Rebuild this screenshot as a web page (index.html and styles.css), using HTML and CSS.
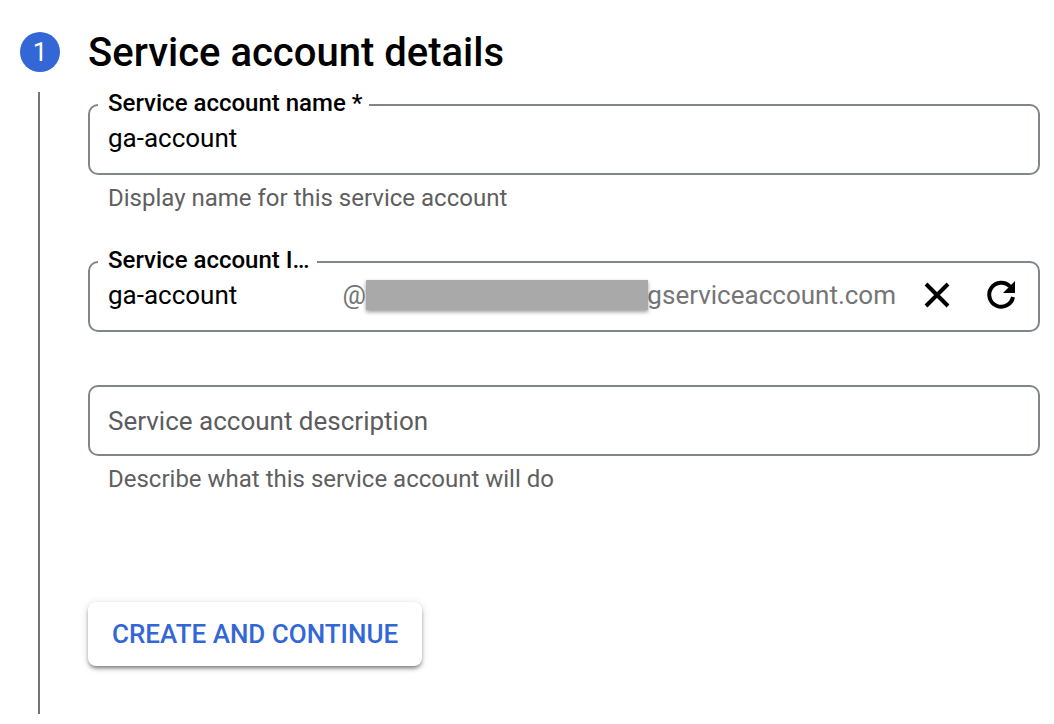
FILE: index.html
```html
<!DOCTYPE html>
<html lang="en">
<head>
<meta charset="utf-8">
<meta name="viewport" content="width=device-width, initial-scale=1">
<title>Service account details</title>
<link rel="stylesheet" href="styles.css">
</head>
<body>
<main class="step">
  <div class="rail">
    <span class="step-number">1</span>
    <span class="rail-line"></span>
  </div>
  <form class="content">
    <h1 class="title">Service account details</h1>

    <div class="field-group">
      <div class="field field-labelled">
        <label class="field-label" for="account-name">Service account name *</label>
        <input class="field-input" id="account-name" type="text" value="ga-account" aria-describedby="name-hint">
      </div>
      <p class="hint" id="name-hint">Display name for this service account</p>
    </div>

    <div class="field-group">
      <div class="field field-labelled">
        <label class="field-label" for="account-id">Service account I…</label>
        <input class="field-input" id="account-id" type="text" value="ga-account">
        <span class="suffix">@t<span class="redacted"></span>gserviceaccount.com</span>
        <span class="actions">
          <button class="icon-button" type="button" aria-label="Clear">
            <svg class="icon" viewBox="0 0 36 36" aria-hidden="true"><path d="M7 7 29 29M29 7 7 29" fill="none" stroke="#000" stroke-width="4"/></svg>
          </button>
          <button class="icon-button" type="button" aria-label="Regenerate">
            <svg class="icon" viewBox="0 0 36 36" aria-hidden="true"><path d="M27 9.500A12 12 0 1 0 30 20" fill="none" stroke="#000" stroke-width="4"/><path d="M32 4V16H20Z" fill="#000"/></svg>
          </button>
        </span>
      </div>
    </div>

    <div class="field-group">
      <div class="field">
        <input class="field-input" id="description" type="text" placeholder="Service account description" aria-label="Service account description" aria-describedby="description-hint">
      </div>
      <p class="hint" id="description-hint">Describe what this service account will do</p>
    </div>

    <button class="submit" type="submit">CREATE AND CONTINUE</button>
  </form>
</main>
</body>
</html>
```
FILE: styles.css
```css
* {
  box-sizing: border-box;
}

body {
  margin: 0;
  background: #fff;
  color: #000;
  font-family: Roboto, "Liberation Sans", sans-serif;
  font-size: 26px;
}

.step {
  display: flex;
  gap: 28px;
  padding: 32px 14px 10px 20px;
  min-height: 100vh;
}

.rail {
  display: flex;
  flex-direction: column;
  align-items: center;
  gap: 20px;
  flex: 0 0 40px;
}

.step-number {
  display: grid;
  place-items: center;
  width: 40px;
  height: 40px;
  border-radius: 50%;
  background: #3367d6;
  color: #fff;
  font-size: 26px;
}

.rail-line {
  flex: 1;
  width: 2px;
  margin-right: 2px;
  background: #757575;
}

.content {
  flex: 1;
  min-width: 0;
}

.title {
  margin: 0 0 30px;
  font-size: 40px;
  font-weight: 500;
  line-height: 42px;
}

.field-group {
  min-height: 110px;
  margin-bottom: 47px;
}

.field-group + .field-group {
  margin-bottom: 14px;
}

.field {
  position: relative;
  display: flex;
  align-items: center;
  min-height: 71px;
  padding: 0 19px 0 18px;
  border: 2px solid #80868b;
  border-radius: 10px;
}

.field-labelled {
  padding-bottom: 3px;
}

.field-label {
  position: absolute;
  top: -19px;
  left: 8px;
  padding: 0 7px 0 10px;
  background: #fff;
  font-size: 24px;
  font-weight: 500;
  line-height: 32px;
}

.field-input {
  flex: 1;
  min-width: 0;
  padding: 0;
  border: 0;
  outline: 0;
  background: none;
  color: inherit;
  font: inherit;
}

.field-input::placeholder {
  color: #5c5c5c;
  opacity: 1;
}

.suffix {
  display: flex;
  align-items: center;
  color: #757575;
}

.redacted {
  position: relative;
  width: 282px;
  height: 30px;
  margin: 0 -1px 0 -8px;
  background: #a9a9a9;
  box-shadow: 0 2px 4px rgba(0, 0, 0, 0.4);
}

.actions {
  display: flex;
  gap: 28px;
  margin-left: 23px;
}

.icon-button {
  display: block;
  padding: 0;
  border: 0;
  background: none;
  cursor: pointer;
}

.icon {
  display: block;
  width: 36px;
  height: 36px;
}

.hint {
  margin: 7px 20px 0;
  color: #5f5f5f;
  font-size: 24px;
  line-height: 32px;
}

.submit {
  margin-top: 93px;
  padding: 0 24px;
  height: 64px;
  border: 0;
  border-radius: 8px;
  background: #fff;
  box-shadow: 0 3px 4px -1px rgba(0, 0, 0, 0.5), 0 1px 8px rgba(0, 0, 0, 0.12);
  color: #3367d6;
  font: inherit;
  font-weight: 500;
  cursor: pointer;
}
```
